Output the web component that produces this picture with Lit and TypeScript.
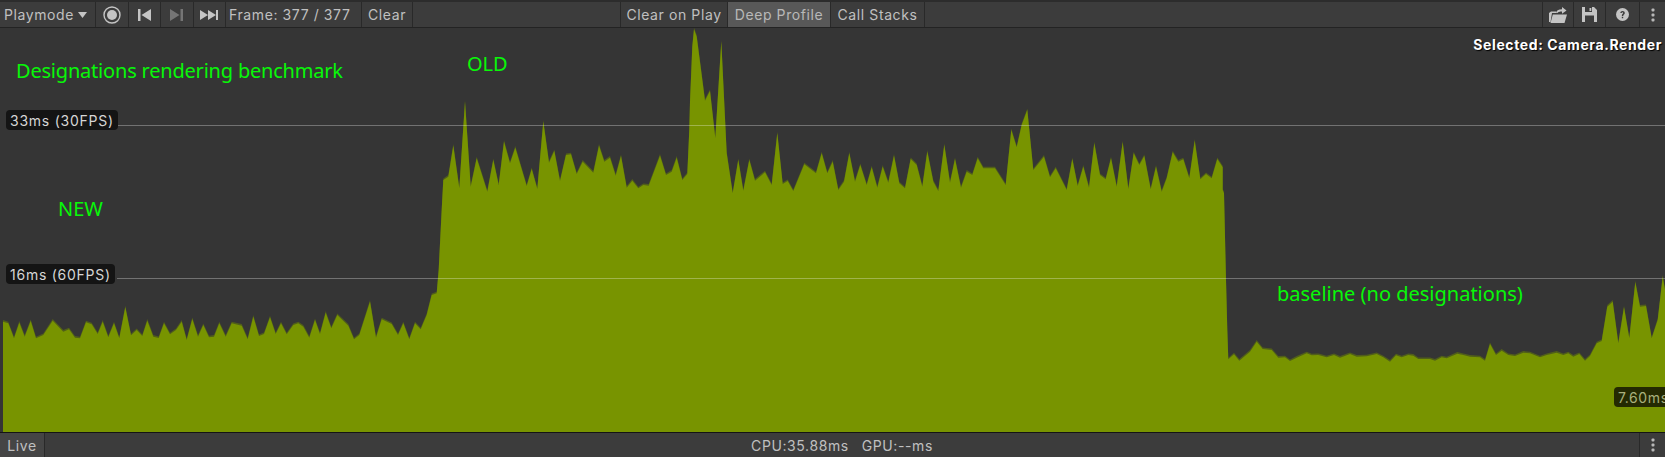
import { LitElement, html, css, svg } from "lit";
import { customElement } from "lit/decorators.js";

type Seg = { ox: number; oy: number; p: number[] };
const segs: Seg[] = [
  { ox: 0, oy: 260, p: [9,185,25,190,42,235,58,188,74,230,92,183,108,235,130,225,158,182,190,215,207,208,225,233,240,235,258,187,275,193,293,222,308,185,325,232,342,190,358,235,376,142,393,226,410,210,427,228,442,182,460,230,476,234,492,190,510,223,528,210,545,185,560,240,577,177,594,230,610,195,627,232,642,230,658,190,677,230,695,190,725,197,743,238,760,170,777,228,792,222,810,172,827,222,843,190,860,223,880,195,895,190,910,200,928,233,945,180,960,222,977,158,994,205,1012,165,1045,197,1062,238,1078,225,1110,125,1128,233,1145,178,1175,192,1194,225,1210,190,1228,238,1245,190,1262,208,1280,165,1295,105,1310,100,1316,30] },
  { ox: 420, oy: 20, p: [65,570,70,480,85,470,100,377,118,505,135,245,152,500,170,415,202,515,220,420,236,495,252,365,270,430,286,383,320,498,335,447,352,507,370,305,387,428,403,393,420,483,438,405,453,403,470,462,488,425,520,458,537,377,553,425,570,413,587,467,603,408,620,503,637,482,655,505,670,495,686,497,720,407,738,465,755,455,770,413,787,480,802,462,808,330,810,245,817,80,822,28,830,50,855,242,870,213,886,355,904,65,920,400,938,520,955,420,970,512,988,420,1005,482,1035,457,1055,495,1072,340,1088,492,1103,483,1120,513,1153,433,1188,460] },
  { ox: 820, oy: 90, p: [5,190,22,250,38,215,55,300,72,275,88,190,105,275,121,225,140,285,155,232,172,293,188,230,205,278,222,197,238,280,255,295,272,207,290,225,307,290,322,185,340,275,355,303,373,165,390,278,405,207,423,293,440,245,457,255,473,205,490,235,525,235,557,285,574,120,590,172,605,105,622,60,640,240,672,200,690,262,707,235,740,300,757,207,773,288,790,230,807,293,823,160,840,255,857,268,873,205,890,290,908,157,925,297,941,190,958,225,973,198,992,298,1008,230,1025,305,1040,265,1058,187,1075,215,1090,208,1108,265,1124,152,1141,268,1158,252,1175,265,1192,207,1208,232,1208,300,1212,310] },
  { ox: 1180, oy: 250, p: [138,90,142,240,145,328,162,313,178,332,210,305,230,275,248,297,275,300,295,323,315,322,330,333,350,323,380,310,395,316,415,315,440,322,462,315,480,323,510,312,530,320,560,319,590,312,610,322,630,335,648,316,665,322,685,315,700,317,715,327,750,327,765,332,785,322,800,325,832,311,850,315,870,320,900,322] },
  { ox: 1400, oy: 270, p: [255,272,270,222,288,255,305,242,325,255,345,258,370,248,390,250,420,262,440,255,470,248,490,255,505,250,520,260,538,252,555,272,570,258,590,220,605,213,622,110,638,95,655,220,672,112,688,205,706,37,720,110,738,108,755,205,773,150,788,20,795,60] },
];

const pts: [number, number][] = [];
for (const s of segs) {
  for (let i = 0; i < s.p.length; i += 2) {
    pts.push([s.ox + s.p[i] / 3, s.oy + s.p[i + 1] / 3]);
  }
}
const BOTTOM = 432;
const fillPts =
  `3,${BOTTOM} ` + pts.map(([x, y]) => `${x.toFixed(1)},${y.toFixed(1)}`).join(" ") + ` 1665,${BOTTOM}`;
const shadePts =
  `3,${BOTTOM} ` + pts.map(([x, y]) => `${x.toFixed(1)},${(y - 1.6).toFixed(1)}`).join(" ") + ` 1665,${BOTTOM}`;

@customElement("app-root")
export class AppRoot extends LitElement {
  static styles = css`
    :host {
      display: flex;
      flex-direction: column;
      width: 1665px;
      height: 457px;
      overflow: hidden;
      background: #353535;
      font-family: Inter, "Liberation Sans", sans-serif;
      font-size: 14px;
      color: #c0c0c0;
      letter-spacing: 0.6px;
    }
    .toolbar {
      display: flex;
      flex: none;
      height: 28px;
      box-sizing: border-box;
      background: #3c3c3c;
      border-top: 2px solid #2c2c2c;
      border-bottom: 1px solid #232323;
    }
    .cell {
      display: flex;
      align-items: center;
      justify-content: center;
      box-sizing: border-box;
      height: 100%;
      border-right: 1px solid #292929;
      white-space: nowrap;
      flex: none;
    }
    .play { width: 96px; justify-content: flex-start; padding-left: 4px; gap: 4px; }
    .icon { width: 32.5px; }
    .frame { width: 136px; justify-content: flex-start; padding-left: 3px; }
    .clear { width: 51px; }
    .gap-mid { width: 207px; flex: none; }
    .spacer { flex: 1; }
    .cop { width: 108px; border-left: 1px solid #292929; }
    .deep { width: 103px; background: #585858; color: #b8b8b8; }
    .calls { width: 94px; }
    .r1 { width: 32px; border-left: 1px solid #292929; }
    .r2 { width: 32px; }
    .r3 { width: 34px; }
    .r4 { width: 25px; border-right: none; }
    .chart { position: relative; flex: 1; min-height: 0; background: #353535; }
    .plot { position: absolute; left: 0; top: 0; width: 1665px; height: 404px; display: block; }
    .note {
      position: absolute;
      font-family: "Noto Sans", sans-serif;
      font-size: 20px;
      line-height: 24px;
      letter-spacing: 0;
      color: #08f808;
      white-space: nowrap;
    }
    .n1 { left: 16px; top: 31px; letter-spacing: -0.2px; }
    .n2 { left: 467px; top: 24px; }
    .n3 { left: 58px; top: 169px; }
    .n4 { left: 1277px; top: 254px; }
    .rule { position: absolute; left: 117px; right: 0; height: 1px; background: rgba(255, 255, 255, 0.3); }
    .r33 { top: 97px; }
    .r16 { top: 250px; }
    .pill {
      position: absolute;
      left: 6px;
      height: 20px;
      padding: 0 4px;
      box-sizing: border-box;
      display: flex;
      align-items: center;
      border-radius: 4px;
      background: #141414;
      color: #d6d6d6;
      letter-spacing: 0.75px;
      white-space: nowrap;
    }
    .p33 { top: 82px; }
    .p16 { top: 236px; }
    .value {
      position: absolute;
      left: 1614px;
      top: 359px;
      height: 20px;
      padding: 0 4px;
      display: flex;
      align-items: center;
      border-radius: 4px 0 0 4px;
      background: #242a02;
      color: #a9b07c;
      white-space: nowrap;
    }
    .selected {
      position: absolute;
      right: 3px;
      top: 8px;
      font-weight: 700;
      letter-spacing: 0.6px;
      color: #fff;
      text-shadow: 1px 1px 1px #000;
      white-space: nowrap;
    }
    .status {
      display: flex;
      flex: none;
      height: 25px;
      box-sizing: border-box;
      background: #3c3c3c;
      border-top: 1px solid #141414;
    }
    .live { width: 45px; background: #454545; }
    .center { flex: 1; display: flex; align-items: center; justify-content: center; gap: 13px; }
    .more { width: 26px; border-left: 1px solid #292929; border-right: none; }
    svg.ico { display: block; }
  `;

  private kebab() {
    return html`<svg class="ico" width="4" height="14" viewBox="0 0 4 14" fill="#b8b8b8">
      <rect x="0.5" y="0.5" width="3" height="3" rx="1"></rect>
      <rect x="0.5" y="5.5" width="3" height="3" rx="1"></rect>
      <rect x="0.5" y="10.5" width="3" height="3" rx="1"></rect>
    </svg>`;
  }

  render() {
    return html`
      <div class="toolbar">
        <div class="cell play">
          Playmode
          <svg class="ico" width="9" height="6" viewBox="0 0 9 6"><path d="M0 0h9L4.5 6z" fill="#c4c4c4"></path></svg>
        </div>
        <div class="cell icon">
          <svg class="ico" width="18" height="18" viewBox="0 0 18 18">
            <circle cx="9" cy="9" r="8" fill="none" stroke="#c4c4c4" stroke-width="1.4"></circle>
            <circle cx="9" cy="9" r="5" fill="#c4c4c4"></circle>
          </svg>
        </div>
        <div class="cell icon">
          <svg class="ico" width="13" height="12" viewBox="0 0 13 12" fill="#c4c4c4"><path d="M0 0h2.5v12H0zM13 0v12L3.5 6z"></path></svg>
        </div>
        <div class="cell icon">
          <svg class="ico" width="13" height="12" viewBox="0 0 13 12" fill="#757575"><path d="M0 0l9.5 6L0 12zM10.5 0H13v12h-2.5z"></path></svg>
        </div>
        <div class="cell icon">
          <svg class="ico" width="18" height="10" viewBox="0 0 18 10" fill="#c4c4c4"><path d="M0 0l8 5-8 5zM8 0l8 5-8 5zM16 0h2v10h-2z"></path></svg>
        </div>
        <div class="cell frame">Frame: 377 / 377</div>
        <div class="cell clear">Clear</div>
        <div class="gap-mid"></div>
        <div class="cell cop">Clear on Play</div>
        <div class="cell deep">Deep Profile</div>
        <div class="cell calls">Call Stacks</div>
        <div class="spacer"></div>
        <div class="cell r1">
          <svg class="ico" width="18" height="16" viewBox="0 0 18 16" fill="#c4c4c4">
            <path d="M0 6l2-1.500h5V6H3L1.500 15H0zM3.800 7.500H18L15.500 16H1.500z"></path>
            <path d="M7 6c.3-2.500 2.200-3.800 6-3.800V0l4.500 3.500L13 6.800V4.500C10.500 4.500 9 5 8.500 6z"></path>
          </svg>
        </div>
        <div class="cell r2">
          <svg class="ico" width="15" height="15" viewBox="0 0 15 15">
            <path fill="#c4c4c4" fill-rule="evenodd" d="M0 0h12l3 3v12H0zM3 0h7v5H3zM3 8.500h9V15H3z"></path>
            <rect x="7.500" y="1" width="1.800" height="3" fill="#c4c4c4"></rect>
          </svg>
        </div>
        <div class="cell r3">
          <svg class="ico" width="13" height="13" viewBox="0 0 13 13">
            <circle cx="6.500" cy="6.500" r="6.500" fill="#c4c4c4"></circle>
            <path d="M4.300 5c.1-1.300 1-2 2.300-2s2.200.8 2.200 1.900c0 1.600-1.600 1.600-1.600 3H5.800c0-2 1.400-2 1.400-2.900 0-.4-.3-.7-.7-.7s-.7.300-.8.700zM5.800 8.800h1.400v1.400H5.800z" fill="#3c3c3c"></path>
          </svg>
        </div>
        <div class="cell r4">${this.kebab()}</div>
      </div>
      <div class="chart">
        <svg class="plot" viewBox="0 28 1665 404" preserveAspectRatio="none">
          ${svg`<polygon points=${shadePts} fill="#505e1a"></polygon>
          <polygon points=${fillPts} fill="#789400"></polygon>`}
        </svg>
        <div class="rule r33"></div>
        <div class="rule r16"></div>
        <div class="pill p33">33ms (30FPS)</div>
        <div class="pill p16">16ms (60FPS)</div>
        <div class="value">7.60ms</div>
        <div class="selected">Selected: Camera.Render</div>
        <div class="note n1">Designations rendering benchmark</div>
        <div class="note n2">OLD</div>
        <div class="note n3">NEW</div>
        <div class="note n4">baseline (no designations)</div>
      </div>
      <div class="status">
        <div class="cell live">Live</div>
        <div class="center"><span>CPU:35.88ms</span><span>GPU:--ms</span></div>
        <div class="cell more">${this.kebab()}</div>
      </div>
    `;
  }
}
